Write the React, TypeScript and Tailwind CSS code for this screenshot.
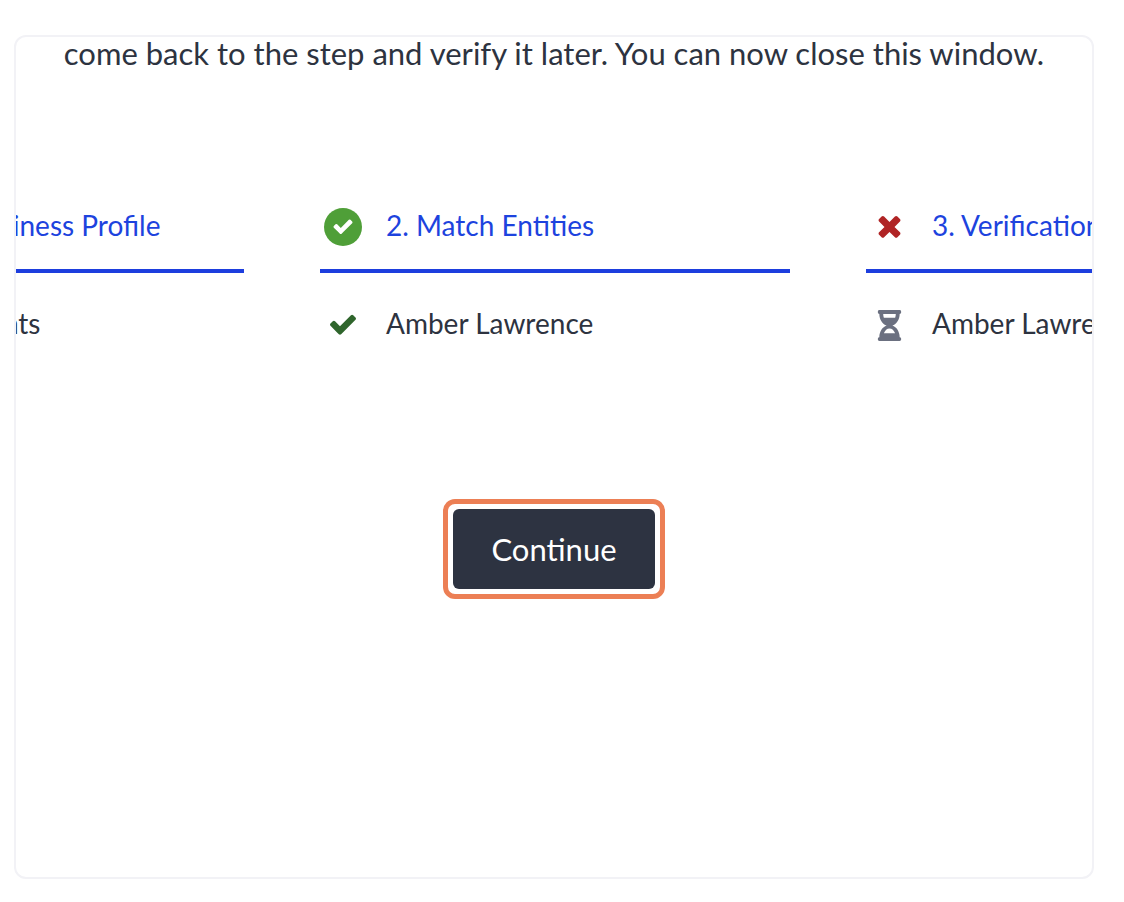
import type { ReactNode } from "react";
import { FaHourglassHalf } from "react-icons/fa";

interface IconProps {
  className?: string;
}

interface StepProps {
  title: string;
  item: string;
  titleIcon: ReactNode;
  itemIcon: ReactNode;
}

function CheckIcon({ className }: IconProps) {
  return (
    <svg viewBox="0 48 1792 1792" fill="currentColor" className={className}>
      <path d="M1671 566q0 40-28 68l-724 724-136 136q-28 28-68 28t-68-28l-136-136-362-362q-28-28-28-68t28-68l136-136q28-28 68-28t68 28l294 295 656-657q28-28 68-28t68 28l136 136q28 28 28 68z" />
    </svg>
  );
}

function CrossIcon({ className }: IconProps) {
  return (
    <svg viewBox="0 96 1792 1792" fill="currentColor" className={className}>
      <path d="M1490 1322q0 40-28 68l-136 136q-28 28-68 28t-68-28l-294-294-294 294q-28 28-68 28t-68-28l-136-136q-28-28-28-68t28-68l294-294-294-294q-28-28-28-68t28-68l136-136q28-28 68-28t68 28l294 294 294-294q28-28 68-28t68 28l136 136q28 28 28 68t-28 68l-294 294 294 294q28 28 28 68z" />
    </svg>
  );
}

function DoneBadge() {
  return (
    <span className="flex size-[38px] items-center justify-center rounded-full bg-[#4f9f38] text-white">
      <CheckIcon className="size-[22px]" />
    </span>
  );
}

function Step({ title, item, titleIcon, itemIcon }: StepProps) {
  return (
    <li className="w-[470px] shrink-0">
      <div className="flex h-[72px] items-center border-b-4 border-[#1d3ede] pb-4">
        <span className="flex w-[46px] shrink-0 justify-center">
          {titleIcon}
        </span>
        <h2 className="ml-5 pb-1 text-[28px] leading-10 text-[#1d43de]">
          {title}
        </h2>
      </div>
      <div className="mt-[30px] flex items-center">
        <span className="flex w-[46px] shrink-0 justify-center">
          {itemIcon}
        </span>
        <p className="ml-5 pb-1 text-[28px] leading-10">{item}</p>
      </div>
    </li>
  );
}

export default function App() {
  return (
    <div className="flex min-h-screen bg-white pt-[35px] pr-[30px] pb-[23px] pl-[14px] font-[Lato,sans-serif] text-[#2d3340]">
      <main className="min-w-0 flex-1 overflow-hidden rounded-xl border-2 border-[#f2f2f6]">
        <p className="text-center text-[31px] leading-8 whitespace-nowrap">
          come back to the step and verify it later. You can now close this
          window.
        </p>

        <ol className="mt-[132px] flex justify-center gap-[76px] pl-0.5">
          <Step
            title="1. Update Business Profile"
            item="Sign Documents"
            titleIcon={<DoneBadge />}
            itemIcon={<CheckIcon className="size-[30px] text-[#2f652c]" />}
          />
          <Step
            title="2. Match Entities"
            item="Amber Lawrence"
            titleIcon={<DoneBadge />}
            itemIcon={<CheckIcon className="size-[30px] text-[#2f652c]" />}
          />
          <Step
            title="3. Verification"
            item="Amber Lawrence"
            titleIcon={<CrossIcon className="size-[33px] text-[#b02425]" />}
            itemIcon={
              <FaHourglassHalf className="size-[31px] text-[#6b7080]" />
            }
          />
        </ol>

        <div className="mt-[152px] flex justify-center">
          <button
            type="button"
            className="rounded-xl border-[5px] border-[#ec7f55] p-[5px]"
          >
            <span className="block rounded-md bg-[#2d3341] px-[38px] py-5 text-[31px] leading-10 text-white">
              Continue
            </span>
          </button>
        </div>
      </main>
    </div>
  );
}
